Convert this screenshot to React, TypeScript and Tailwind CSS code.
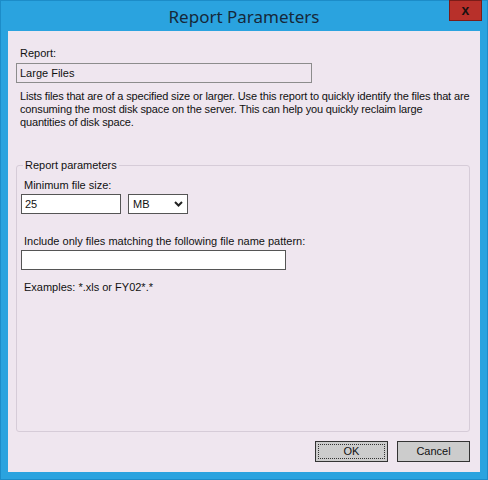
import React from "react";

export default function App() {
  const f = { fontFamily: '"Liberation Sans", Arial, sans-serif' };
  return (
    <div className="w-[488px] h-[480px] bg-[#1c8cc8] p-px">
      <div className="w-full h-full bg-[#2aa3df] flex flex-col">
        <div className="h-[30px] relative flex items-center justify-center">
          <span className="text-[17px] text-[#16283a] mt-[2px]" style={{ fontFamily: '"Noto Sans", "Open Sans", sans-serif' }}>
            Report Parameters
          </span>
          <div className="absolute right-[5px] top-[-1px] w-[33px] h-[21px] bg-[#b8302a] border border-[#7a1c18] flex items-center justify-center">
            <span className="text-[14px] font-bold text-[#1a1010] leading-none mb-[2px]" style={f}>x</span>
          </div>
        </div>
        <div className="mx-[7px] mb-[7px] flex-1 bg-[#efe6ef] flex flex-col px-[8px] text-[11px] text-[#111]" style={f}>
          <div className="pl-[4px] pt-[15px] leading-[14px]">Report:</div>
          <div className="mt-[3px] w-[296px] h-[20px] border border-[#8c8c8c] flex items-center pl-[3px] leading-none">Large Files</div>
          <div className="pl-[4px] pt-[7px] leading-[13px] tracking-[-0.15px] whitespace-nowrap">
            Lists files that are of a specified size or larger. Use this report to quickly identify the files that are
            <br />
            consuming the most disk space on the server. This can help you quickly reclaim large
            <br />
            quantities of disk space.
          </div>
          <div className="relative mt-[36px] h-[267px] w-[454px] border border-[#d6ccd8] rounded-[3px] px-[4px] pt-[12px]">
            <span className="absolute left-[6px] top-[-8px] bg-[#efe6ef] px-[2px] leading-[14px]">Report parameters</span>
            <div className="pl-[3px] leading-[14px]">Minimum file size:</div>
            <div className="flex gap-[7px] mt-[2px]">
              <div className="w-[100px] h-[20px] bg-white border border-[#555] flex items-center pl-[3px] leading-none">25</div>
              <div className="w-[60px] h-[20px] bg-white border border-[#555] flex items-center pl-[4px] pr-[4px] justify-between leading-none">
                <span>MB</span>
                <svg width="9" height="6" viewBox="0 0 9 6"><path d="M1 1 L4.5 4.5 L8 1" stroke="#222" strokeWidth="2" fill="none" /></svg>
              </div>
            </div>
            <div className="pl-[3px] mt-[20px] leading-[14px]">Include only files matching the following file name pattern:</div>
            <div className="mt-[2px] w-[265px] h-[20px] bg-white border border-[#555]"></div>
            <div className="pl-[3px] mt-[10px] leading-[14px]">Examples: *.xls or FY02*.*</div>
          </div>
          <div className="flex justify-end gap-[9px] mt-[9px] pr-[2px]">
            <div className="w-[73px] h-[21px] bg-[#cccccc] border border-[#333] flex items-center justify-center p-[2px]">
              <div className="w-full h-full border border-dotted border-[#333] flex items-center justify-center leading-none">OK</div>
            </div>
            <div className="w-[73px] h-[21px] bg-[#cccccc] border border-[#333] flex items-center justify-center leading-none">Cancel</div>
          </div>
        </div>
      </div>
    </div>
  );
}
